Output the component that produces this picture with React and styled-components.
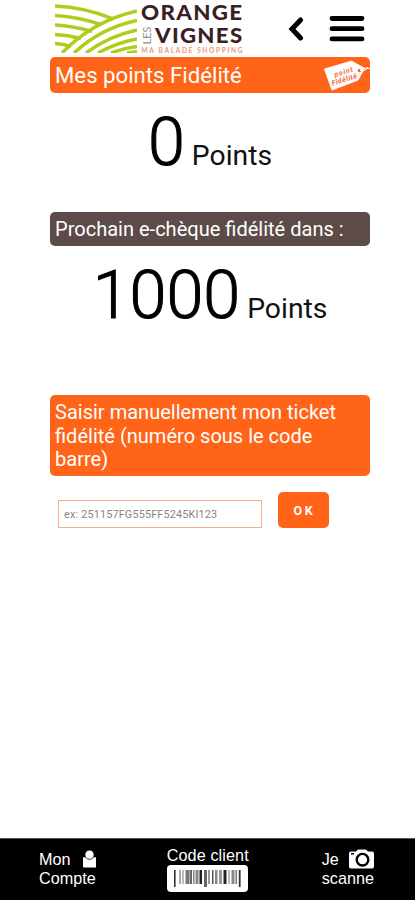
import React, { useState } from "react";
import styled, { createGlobalStyle } from "styled-components";

const ORANGE = "#ff6418";

const FieldArt = () => (
  <svg width="82" height="50" viewBox="0 0 82 50" fill="none">
    <g stroke="#b0cc1c" strokeWidth="3.500">
      <path d="M0 3Q30 4.500 57 15.500" />
      <path d="M0 12.500Q24 14 46 21.500" />
      <path d="M0 22Q18 23 37 28.500" />
      <path d="M0 31.500Q13 32 26 35.500" />
      <path d="M0 40.500Q8 41 16 43.500" />
      <path d="M7 50Q38 18 82 8" />
      <path d="M19 50Q46 25 82 17.500" />
      <path d="M31 50Q54 33 82 27" />
      <path d="M43 50Q61 40 82 36" />
      <path d="M56 50Q69 45 82 43.500" />
      <path d="M72 50Q77 49 82 49" />
    </g>
  </svg>
);

const LogoName = () => (
  <svg width="108" height="56" viewBox="0 0 108 56">
    <g fontFamily="Lato, sans-serif" fontWeight="900" fill="#3b1f27" letterSpacing="1.2">
      <text x="4" y="20" fontSize="20.500" textLength="102.500" lengthAdjust="spacingAndGlyphs">
        ORANGE
      </text>
      <text x="18" y="42.500" fontSize="20.500" textLength="88.500" lengthAdjust="spacingAndGlyphs">
        VIGNES
      </text>
    </g>
    <text
      transform="translate(13.500 44.500) rotate(-90)"
      fontFamily="Lato, sans-serif"
      fontSize="11.500"
      fill="#999395"
      textLength="18"
    >
      LES
    </text>
    <text
      x="4.500"
      y="53"
      fontFamily="Lato, sans-serif"
      fontWeight="700"
      fontSize="6.600"
      fill="#ee9870"
      textLength="101"
    >
      MA BALADE SHOPPING
    </text>
  </svg>
);

const BackIcon = () => (
  <svg width="18" height="28" viewBox="0 0 18 28" fill="none">
    <path
      d="M14.500 5L6 14L14.500 23"
      stroke="#000"
      strokeWidth="5"
      strokeLinecap="round"
    />
  </svg>
);

const MenuIcon = () => (
  <svg width="36" height="28" viewBox="0 0 36 28">
    <path
      d="M3 4.500H33M3 14.700H33M3 24.900H33"
      stroke="#000"
      strokeWidth="4.800"
      strokeLinecap="round"
    />
  </svg>
);

const TagIcon = () => (
  <svg width="48" height="34" viewBox="0 0 48 34">
    <path
      d="M2.500 11L29.500 3.200L42.500 10.300L36 22L10 32Z"
      fill="#fff"
      stroke="#fff"
      strokeLinejoin="round"
    />
    <circle cx="37.500" cy="12.500" r="1.800" fill={ORANGE} />
    <path d="M38 12Q42 9 48 10.500M38 12.500Q43 14 46 9" stroke="#fff" strokeWidth="1" fill="none" />
    <g
      transform="rotate(-17 20 18)"
      fontFamily="Roboto, sans-serif"
      fontStyle="italic"
      fontWeight="700"
      fontSize="7.200"
      fill="#ef7044"
    >
      <text x="13" y="17" textLength="19">
        point
      </text>
      <text x="8" y="24.500" textLength="26">
        Fidélité
      </text>
    </g>
  </svg>
);

const PersonIcon = () => (
  <svg width="13" height="18" viewBox="0 0 13 18" fill="#fff">
    <path d="M0 7.200H13V17.500H1Q0 17.500 0 16.500Z" />
    <circle cx="6.500" cy="4.700" r="4.600" stroke="#000" strokeWidth="0.800" />
  </svg>
);

const CameraIcon = () => (
  <svg width="25" height="20" viewBox="0 0 25 20">
    <path
      d="M2 2.500H7L9 0.500H17L19 2.500H23Q25 2.500 25 4.500V17.500Q25 19.500 23 19.500H2Q0 19.500 0 17.500V4.500Q0 2.500 2 2.500Z"
      fill="#fff"
    />
    <circle cx="13.500" cy="10.700" r="5.800" fill="none" stroke="#000" strokeWidth="2.400" />
    <path d="M2 4.800H5" stroke="#000" strokeWidth="1.600" />
  </svg>
);

// x, width, height, grey level
const bars = [
  [0, 1.6, 17, "#333"],
  [5, 2, 14, "#aaa"],
  [8, 2, 14, "#bbb"],
  [11.5, 3.5, 14, "#777"],
  [15.5, 2.5, 14, "#666"],
  [19, 1.5, 14, "#888"],
  [21.5, 3, 14, "#888"],
  [25.5, 2.5, 14, "#222"],
  [30, 3, 17, "#666"],
  [34, 2, 14, "#999"],
  [38, 1.5, 14, "#555"],
  [41, 2.5, 14, "#888"],
  [45, 3, 14, "#999"],
  [49.5, 3, 14, "#222"],
  [54, 2, 14, "#bbb"],
  [57.5, 3, 14, "#888"],
  [61.5, 1.5, 14, "#777"],
  [64.8, 1.8, 17, "#333"],
];

const Barcode = () => (
  <svg width="67" height="17" viewBox="0 0 67 17">
    {bars.map(([x, w, h, fill]) => (
      <rect key={x} x={x} y="0" width={w} height={h} fill={fill} />
    ))}
  </svg>
);

const App = () => {
  let [ticket, setTicket] = useState("");

  return (
    <>
      <GlobalStyle />
      <Page>
        <Header>
          <Logo>
            <FieldArt />
            <LogoName />
          </Logo>
          <IconButton aria-label="Retour">
            <BackIcon />
          </IconButton>
          <IconButton aria-label="Menu">
            <MenuIcon />
          </IconButton>
        </Header>

        <Content>
          <Banner $size="22.2px" $height="36px">
            <BannerText>Mes points Fidélité</BannerText>
            <TagIcon />
          </Banner>
          <Score $height="119px">
            <strong>0</strong> Points
          </Score>

          <Banner $dark $size="20.05px" $height="34px">
            <BannerText>Prochain e-chèque fidélité dans :</BannerText>
          </Banner>
          <Score $height="149px">
            <strong>1000</strong> Points
          </Score>

          <Banner $size="20.05px" $height="81px">
            <BannerText>
              Saisir manuellement mon ticket fidélité (numéro sous le code barre)
            </BannerText>
          </Banner>
          <Form onSubmit={(e) => e.preventDefault()}>
            <TicketInput
              placeholder="ex: 251157FG555FF5245KI123"
              value={ticket}
              onChange={(e) => setTicket(e.target.value)}
            />
            <OkButton>OK</OkButton>
          </Form>
        </Content>

        <Footer>
          <Tab $left="39px">
            <TabLine $gap="12px">
              Mon <PersonIcon />
            </TabLine>
            <span>Compte</span>
          </Tab>
          <ClientTab>
            <span>Code client</span>
            <BarcodeBox>
              <Barcode />
            </BarcodeBox>
          </ClientTab>
          <Tab $left="73px">
            <TabLine $gap="10px">
              Je <CameraIcon />
            </TabLine>
            <span>scanne</span>
          </Tab>
        </Footer>
      </Page>
    </>
  );
};

export default App;

const GlobalStyle = createGlobalStyle`
  * {
    box-sizing: border-box;
  }
  body {
    margin: 0;
    background: #fff;
    font-family: Roboto, sans-serif;
  }
`;

const Page = styled.div`
  display: flex;
  flex-direction: column;
  width: 415px;
  height: 900px;
  overflow: hidden;
  background: #fff;
`;

const Header = styled.header`
  display: flex;
  align-items: flex-start;
  height: 57px;
  padding-left: 55px;
`;

const Logo = styled.div`
  display: flex;
  width: 231px;

  svg:first-child {
    margin-top: 3px;
  }
`;

const IconButton = styled.button`
  display: flex;
  padding: 0;
  margin: 15px 0 0;
  border: 0;
  background: none;
  cursor: pointer;

  & + & {
    margin: 14px 0 0 25px;
  }
`;

const Content = styled.main`
  flex: 1;
  width: 320px;
  margin-left: 50px;
`;

const Banner = styled.div`
  display: flex;
  align-items: center;
  justify-content: space-between;
  height: ${({ $height }) => $height};
  padding: 0 0 0 5px;
  border-radius: 5px;
  background: ${({ $dark }) => ($dark ? "#5c4b48" : ORANGE)};
  color: #fff;
  font-size: ${({ $size }) => $size};
  line-height: 23.5px;
`;

const BannerText = styled.span`
  padding-top: 2px;
`;

const Score = styled.p`
  height: ${({ $height }) => $height};
  margin: 0;
  padding-top: 1px;
  text-align: center;
  font-size: 28.3px;
  line-height: 96px;
  color: #111;

  strong {
    font-size: 66.5px;
    font-weight: 300;
    color: #000;
    -webkit-text-stroke: 1px #000;
  }
`;

const Form = styled.form`
  display: flex;
  align-items: flex-end;
  height: 52px;
  padding-left: 8px;
`;

const TicketInput = styled.input`
  width: 204px;
  height: 28px;
  padding: 0 5px;
  border: 1px solid #f6ab91;
  border-radius: 0;
  outline: none;
  font-family: Roboto, sans-serif;
  font-size: 10.8px;
  letter-spacing: 0.19px;

  &::placeholder {
    color: #858585;
  }
`;

const OkButton = styled.button`
  width: 51px;
  height: 36px;
  margin-left: 16px;
  padding: 0 0 0 2px;
  border: 0;
  border-radius: 5px;
  background: ${ORANGE};
  color: #fff;
  font-family: Roboto, sans-serif;
  font-size: 12.5px;
  font-weight: 700;
  letter-spacing: 2.6px;
  cursor: pointer;
`;

const Footer = styled.footer`
  display: flex;
  height: 62px;
  border-top: 1px solid #555;
  background: #000;
  color: #fff;
  font-family: "Liberation Sans", Arial, sans-serif;
  font-size: 16.2px;
  line-height: 19px;
`;

const Tab = styled.div`
  display: flex;
  flex-direction: column;
  margin-left: ${({ $left }) => $left};
  padding-top: 10px;
`;

const TabLine = styled.div`
  display: flex;
  align-items: center;
  gap: ${({ $gap }) => $gap};
  height: 20px;
`;

const ClientTab = styled.div`
  display: flex;
  flex-direction: column;
  width: 82px;
  margin-left: 71px;
  padding-top: 7px;
  white-space: nowrap;
  letter-spacing: 0.1px;
`;

const BarcodeBox = styled.div`
  display: flex;
  align-items: center;
  justify-content: center;
  width: 81px;
  height: 27px;
  border-radius: 4px;
  background: #fff;
`;
